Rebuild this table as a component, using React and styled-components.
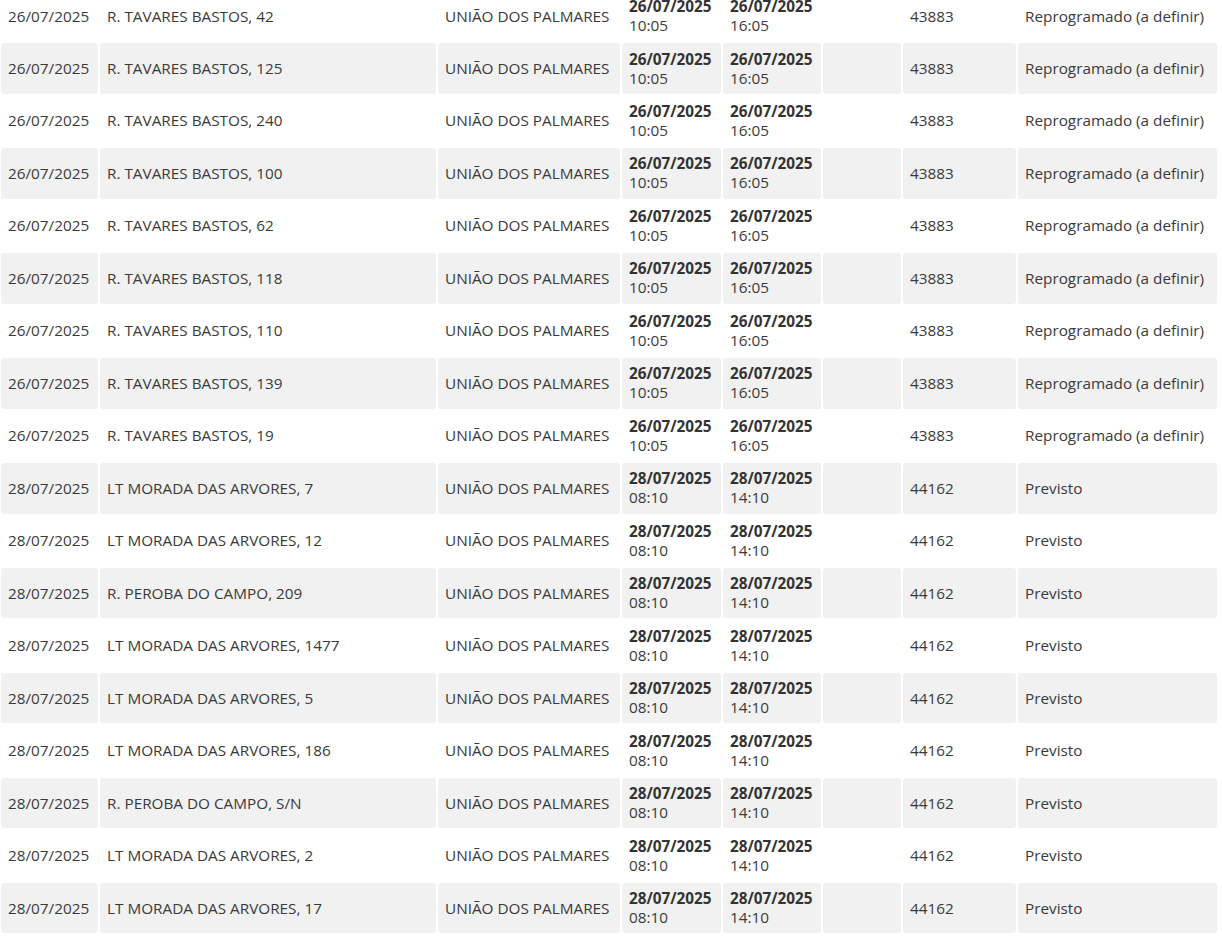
import React from "react";
import styled, { createGlobalStyle } from "styled-components";

const GlobalStyle = createGlobalStyle`
  html, body {
    margin: 0;
    padding: 0;
    background: #fff;
    overflow: hidden;
  }
  body {
    font-family: "Open Sans", "Noto Sans", sans-serif;
    color: #333;
  }
`;

const tavares = [42, 125, 240, 100, 62, 118, 110, 139, 19].map((n) => ({
  date: "26/07/2025",
  address: `R. TAVARES BASTOS, ${n}`,
  city: "UNIÃO DOS PALMARES",
  start: ["26/07/2025", "10:05"],
  end: ["26/07/2025", "16:05"],
  code: "43883",
  status: "Reprogramado (a definir)",
}));

const morada = [
  "LT MORADA DAS ARVORES, 7",
  "LT MORADA DAS ARVORES, 12",
  "R. PEROBA DO CAMPO, 209",
  "LT MORADA DAS ARVORES, 1477",
  "LT MORADA DAS ARVORES, 5",
  "LT MORADA DAS ARVORES, 186",
  "R. PEROBA DO CAMPO, S/N",
  "LT MORADA DAS ARVORES, 2",
  "LT MORADA DAS ARVORES, 17",
].map((address) => ({
  date: "28/07/2025",
  address,
  city: "UNIÃO DOS PALMARES",
  start: ["28/07/2025", "08:10"],
  end: ["28/07/2025", "14:10"],
  code: "44162",
  status: "Previsto",
}));

const rows = [...tavares, ...morada];

export default function App() {
  return (
    <>
      <GlobalStyle />
      <Table>
        {rows.map((row, i) => (
          <Row key={i}>
            <Cell $shade={i % 2 === 1}>{row.date}</Cell>
            <Cell $shade={i % 2 === 1}>{row.address}</Cell>
            <Cell $shade={i % 2 === 1}>{row.city}</Cell>
            <Cell $shade={i % 2 === 1}>
              <Stack>
                <strong>{row.start[0]}</strong>
                <span>{row.start[1]}</span>
              </Stack>
            </Cell>
            <Cell $shade={i % 2 === 1}>
              <Stack>
                <strong>{row.end[0]}</strong>
                <span>{row.end[1]}</span>
              </Stack>
            </Cell>
            <Cell $shade={i % 2 === 1} />
            <Cell $shade={i % 2 === 1}>{row.code}</Cell>
            <Cell $shade={i % 2 === 1}>{row.status}</Cell>
          </Row>
        ))}
      </Table>
    </>
  );
}

const Table = styled.div`
  display: flex;
  flex-direction: column;
  gap: 2px;
  margin-top: -9.2px;
  margin-left: 1px;
`;

const Row = styled.div`
  display: grid;
  grid-template-columns: 97px 336px 182px 99px 98px 78px 113px 199px;
  gap: 2px;
  height: 50.47px;
`;

const Cell = styled.div`
  display: flex;
  align-items: center;
  padding: 0 7px;
  border-radius: 3px;
  background: ${({ $shade }) => ($shade ? "#f1f1f1" : "#fff")};
  font-size: 15.3px;
  line-height: 19px;
  color: #3a3a3a;
  white-space: nowrap;
  overflow: hidden;
`;

const Stack = styled.div`
  display: flex;
  flex-direction: column;

  strong {
    font-weight: 700;
    color: #333;
  }
`;
